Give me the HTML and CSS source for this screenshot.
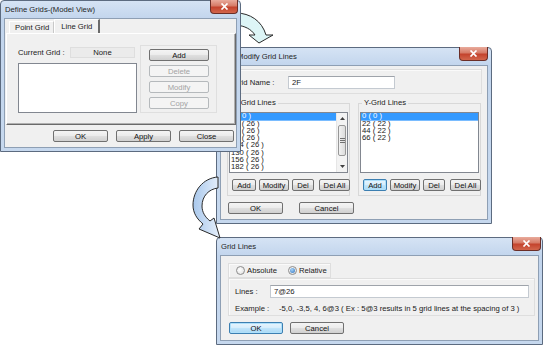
FILE: index.html
```html
<!DOCTYPE html>
<html>
<head>
<meta charset="utf-8">
<link rel="stylesheet" href="styles.css">
</head>
<body>
<div class="desk">

  <svg class="arrow arrow1" viewBox="230 8 46 40" width="46" height="40">
    <path d="M236 13 C250 13 262 21 266 35 L273 35 L259 43 L249 35 L255 35 C251 29 245 26 236 25 Z" fill="#ddf5f6" stroke="#2a2a2a" stroke-width="1"/>
  </svg>

  <div class="win w2">
    <div class="title title-icon">Modify Grid Lines
      <span class="close"><svg width="9" height="7" viewBox="0 0 9 7"><path d="M1.5 0.5L7.5 6.5M7.5 0.5L1.5 6.5" stroke="#fff" stroke-width="1.7"/></svg></span>
    </div>
    <div class="client c2">
      <div class="panel namepanel">
        <span class="namelbl">Grid Name :</span>
        <div class="input name-input">2F</div>
      </div>
      <div class="groups">
        <fieldset class="grp">
          <legend>X-Grid Lines</legend>
          <div class="list glist">
            <div class="items">
              <div class="item sel">0 ( 0 )</div>
              <div class="item">26 ( 26 )</div>
              <div class="item">52 ( 26 )</div>
              <div class="item">78 ( 26 )</div>
              <div class="item">104 ( 26 )</div>
              <div class="item">130 ( 26 )</div>
              <div class="item">156 ( 26 )</div>
              <div class="item">182 ( 26 )</div>
            </div>
            <div class="vscroll">
              <div class="sarrow"><svg width="5" height="3" viewBox="0 0 5 3"><path d="M0 3L2.5 0L5 3Z" fill="#404040"/></svg></div>
              <div class="strack">
                <div class="thumb"><svg width="5" height="5" viewBox="0 0 5 5"><path d="M0 0.5H5M0 2.5H5M0 4.5H5" stroke="#707070" stroke-width="1"/></svg></div>
              </div>
              <div class="sarrow"><svg width="5" height="3" viewBox="0 0 5 3"><path d="M0 0L2.5 3L5 0Z" fill="#404040"/></svg></div>
            </div>
          </div>
          <div class="btnrow">
            <div class="btn b-add">Add</div>
            <div class="btn b-mod">Modify</div>
            <div class="btn b-del">Del</div>
            <div class="btn b-all">Del All</div>
          </div>
        </fieldset>
        <fieldset class="grp">
          <legend>Y-Grid Lines</legend>
          <div class="list glist">
            <div class="items">
              <div class="item sel">0 ( 0 )</div>
              <div class="item">22 ( 22 )</div>
              <div class="item">44 ( 22 )</div>
              <div class="item">66 ( 22 )</div>
            </div>
          </div>
          <div class="btnrow">
            <div class="btn b-add focus">Add</div>
            <div class="btn b-mod">Modify</div>
            <div class="btn b-del">Del</div>
            <div class="btn b-all">Del All</div>
          </div>
        </fieldset>
      </div>
      <div class="okrow okrow2">
        <div class="btn w54">OK</div>
        <div class="btn w54">Cancel</div>
      </div>
    </div>
  </div>

  <div class="win w3">
    <div class="title">Grid Lines
      <span class="close"><svg width="9" height="7" viewBox="0 0 9 7"><path d="M1.5 0.5L7.5 6.5M7.5 0.5L1.5 6.5" stroke="#fff" stroke-width="1.7"/></svg></span>
    </div>
    <div class="client c3">
      <div class="panel radiopanel">
        <span class="radio"></span><span class="rlbl">Absolute</span>
        <span class="radio on"></span><span class="rlbl">Relative</span>
      </div>
      <div class="panel linespanel">
        <div class="linesrow">
          <span class="lineslbl">Lines :</span>
          <div class="input lines-input">7@26</div>
        </div>
        <div class="examplerow">
          <span class="exlbl">Example :</span>
          <span>-5,0, -3,5, 4, 6@3 ( Ex : 5@3 results in 5 grid lines at the spacing of 3 )</span>
        </div>
      </div>
      <div class="okrow okrow3">
        <div class="btn w53 focus">OK</div>
        <div class="btn w53">Cancel</div>
      </div>
    </div>
  </div>

  <svg class="arrow arrow2" viewBox="188 174 36 68" width="36" height="68">
    <defs>
      <linearGradient id="ag" x1="0" y1="0" x2="1" y2="0">
        <stop offset="0" stop-color="#a9c8ec"/>
        <stop offset="1" stop-color="#e6effa"/>
      </linearGradient>
    </defs>
    <path d="M218 177 C203 178 193 191 193 205 C193 213 197 219 203 224 L199 229 L220 238 L214 218 L210 221 C205 217 202 212 202 206 C202 196 209 189 218 188 Z" fill="url(#ag)" stroke="#2a2a2a" stroke-width="1"/>
  </svg>

  <div class="win w1">
    <div class="title">Define Grids-(Model View)
      <span class="close"><svg width="9" height="7" viewBox="0 0 9 7"><path d="M1.5 0.5L7.5 6.5M7.5 0.5L1.5 6.5" stroke="#fff" stroke-width="1.7"/></svg></span>
    </div>
    <div class="client c1">
      <div class="tabs">
        <div class="tab">Point Grid</div>
        <div class="tab active">Line Grid</div>
      </div>
      <div class="tabpanel">
        <div class="leftcol">
          <div class="currow">
            <span class="curlbl">Current Grid :</span>
            <div class="field">None</div>
          </div>
          <div class="list biglist"></div>
        </div>
        <div class="btngroup">
          <div class="btn">Add</div>
          <div class="btn dis">Delete</div>
          <div class="btn dis">Modify</div>
          <div class="btn dis">Copy</div>
        </div>
      </div>
      <div class="okrow okrow1">
        <div class="btn w54">OK</div>
        <div class="btn w54">Apply</div>
        <div class="btn w54">Close</div>
      </div>
    </div>
  </div>

</div>
</body>
</html>
```

FILE: styles.css
```css
* { box-sizing: border-box; }

body {
  margin: 0;
  background: #ffffff;
  font-family: "Liberation Sans", Arial, sans-serif;
  font-size: 7.7px;
  color: #1a1a1a;
}

.desk {
  position: relative;
  width: 548px;
  height: 345px;
  overflow: hidden;
  background: #ffffff;
}

.arrow { position: absolute; z-index: 2; overflow: visible; }
.arrow1 { left: 230px; top: 8px; }
.arrow2 { left: 188px; top: 174px; }

/* window frame */
.win {
  position: absolute;
  display: flex;
  flex-direction: column;
  border: 1px solid #5c6b80;
  border-radius: 4px 4px 0 0;
  background: linear-gradient(#d5e3f4, #c2d5ed 18px, #c6d8ee);
  padding: 0 3px 3px;
}
.w1 { left: 0; top: 0; width: 241px; height: 152px; z-index: 3; }
.w2 { left: 216px; top: 47px; width: 276px; height: 177px; z-index: 1; }
.w3 { left: 216px; top: 237px; width: 327px; height: 108px; z-index: 1; }

.title {
  position: relative;
  height: 17px;
  display: flex;
  align-items: center;
  padding-left: 1px;
  color: #1e1e1e;
  white-space: nowrap;
}
.title-icon { padding-left: 17px; }

.close {
  position: absolute;
  right: 0;
  top: -1px;
  width: 29px;
  height: 14px;
  display: flex;
  align-items: center;
  justify-content: center;
  border: 1px solid #6b2e27;
  border-top: 0;
  border-radius: 0 0 4px 4px;
  background: linear-gradient(#e9ab9c, #d67b67 45%, #c4432d 55%, #d2664c);
}
.w1 .close { right: -1px; width: 28px; }
.w3 .close { right: -2px; }

.client {
  flex: 1;
  display: flex;
  flex-direction: column;
  background: #f0f0f0;
  border: 1px solid #8e9fb4;
  min-height: 0;
}

/* buttons */
.btn {
  height: 12px;
  flex-shrink: 0;
  display: flex;
  align-items: center;
  justify-content: center;
  border: 1px solid #707070;
  border-radius: 2px;
  background: linear-gradient(#f4f4f4, #ececec 45%, #dedede 55%, #d0d0d0);
  color: #111;
  white-space: nowrap;
}
.btn.dis {
  border-color: #b5b9bc;
  background: #f4f4f4;
  color: #a3a3a3;
}
.btn.focus {
  border-color: #3c7fb1;
  background: linear-gradient(#e9f5fd, #d7eefc 45%, #bfe4fa 55%, #a9d8f4);
  box-shadow: 0 0 0 1px #aee0fb inset;
}
.w53 { width: 54px; }
.w54 { width: 55px; }

/* inputs/lists */
.input {
  height: 13px;
  display: flex;
  align-items: center;
  padding-left: 3px;
  background: #fff;
  border: 1px solid #c4cad1;
  border-top-color: #9ea3aa;
}
.list {
  background: #fff;
  border: 1px solid #828790;
  overflow: hidden;
}

/* ---------- dialog 1 ---------- */
.tabs {
  display: flex;
  align-items: flex-end;
  height: 14px;
  padding-left: 4px;
}
.tab {
  height: 12px;
  padding: 0 4px 0 5px;
  display: flex;
  align-items: center;
  border: 1px solid #ffffff;
  border-bottom: 0;
  border-right: 1px solid #c8c8c8;
  background: #f0f0f0;
}
.tab.active {
  height: 14px;
  padding: 0 6px 1px 6px;
  border-right: 2px solid #6a6a6a;
}
.tabpanel {
  height: 92px;
  margin-left: 1px;
  display: flex;
  gap: 3px;
  padding: 11px 0 0 11px;
  border: 1px solid;
  border-color: #ffffff #6a6a6a #6a6a6a #ffffff;
  box-shadow: inset -1px -1px 0 #b0b0b0;
}
.leftcol {
  width: 119px;
  display: flex;
  flex-direction: column;
  padding-top: 2px;
}
.currow { display: flex; align-items: center; height: 11px; }
.curlbl { width: 52px; white-space: nowrap; }
.field {
  width: 65px;
  height: 11px;
  display: flex;
  align-items: center;
  justify-content: center;
  background: #ebebeb;
  border: 1px solid #dedede;
}
.biglist { margin-top: 5px; height: 50px; }
.btngroup {
  width: 77px;
  height: 68px;
  display: flex;
  flex-direction: column;
  gap: 4px;
  padding: 3px 0 0 8px;
  border: 1px solid #dfdfdf;
}
.btngroup .btn { width: 60px; }
.okrow1 {
  display: flex;
  justify-content: flex-end;
  gap: 8px;
  padding-right: 2px;
  margin-top: 5px;
}

/* ---------- dialog 2 ---------- */
.c2 { padding: 3px 5px 0 6px; }
.panel {
  border: 1px solid #dedede;
  box-shadow: inset 1px 1px 0 #fafafa;
}
.namepanel {
  height: 25px;
  display: flex;
  align-items: center;
  padding: 2px 0 0 5px;
}
.namelbl { width: 55px; white-space: nowrap; }
.name-input { width: 107px; height: 13px; }

.groups {
  display: flex;
  gap: 8px;
  margin-top: 4px;
}
.grp {
  margin: 0;
  width: 123px;
  min-width: 0;
  padding: 4px 2px 4px 1px;
  border: 1px solid #d8d8d8;
}
.grp legend {
  padding: 0 2px;
  margin-left: 2px;
  line-height: 10px;
  height: 10px;
}
.glist {
  height: 61px;
  display: flex;
  width: 119px;
}
.items {
  flex: 1;
  transform: scaleY(0.85);
  transform-origin: 0 0;
}
.item {
  height: 8.6px;
  line-height: 8.6px;
  padding-left: 1px;
  white-space: nowrap;
}
.item.sel { background: #3399ff; color: #fff; }

.vscroll {
  width: 11px;
  flex-shrink: 0;
  display: flex;
  flex-direction: column;
  background: #f3f3f3;
  border-left: 1px solid #e6e6e6;
}
.sarrow {
  height: 11px;
  display: flex;
  align-items: center;
  justify-content: center;
}
.strack { flex: 1; padding-top: 1px; }
.thumb {
  margin: 0 1px;
  height: 31px;
  display: flex;
  align-items: center;
  justify-content: center;
  border: 1px solid #979797;
  border-radius: 2px;
  background: linear-gradient(90deg, #f2f2f2, #dcdcdc);
}

.btnrow {
  display: flex;
  margin-top: 6px;
  padding-left: 3px;
}
.b-add { width: 24px; }
.b-mod { width: 30px; margin-left: 3px; }
.b-del { width: 22px; margin-left: 3px; }
.b-all { width: 31px; margin-left: 5px; }

.okrow2 {
  display: flex;
  gap: 16px;
  margin: 6px 0 0 1px;
}

/* ---------- dialog 3 ---------- */
.c3 { padding: 7px 3px 0 7px; }
.radiopanel {
  width: 103px;
  height: 15px;
  display: flex;
  align-items: center;
  padding-left: 7px;
}
.radio {
  width: 9px;
  height: 9px;
  flex-shrink: 0;
  border-radius: 50%;
  border: 1px solid #8d8d8d;
  background: radial-gradient(circle at 40% 40%, #ffffff, #dcdcdc);
  display: flex;
  align-items: center;
  justify-content: center;
}
.radio.on::after {
  content: "";
  width: 5px;
  height: 5px;
  border-radius: 50%;
  background: radial-gradient(circle at 40% 35%, #a8d4f7, #2b6fbf);
}
.rlbl { margin-left: 2px; margin-right: 11px; white-space: nowrap; }

.linespanel {
  height: 38px;
  display: flex;
  flex-direction: column;
  padding: 6px 0 0 6px;
}
.linesrow { display: flex; align-items: center; }
.lineslbl { width: 35px; }
.lines-input { width: 259px; height: 13px; }
.examplerow {
  display: flex;
  margin-top: 6px;
  white-space: nowrap;
}
.exlbl { width: 44px; }

.okrow3 {
  display: flex;
  gap: 7px;
  margin: 6px 0 0 1px;
}
```
